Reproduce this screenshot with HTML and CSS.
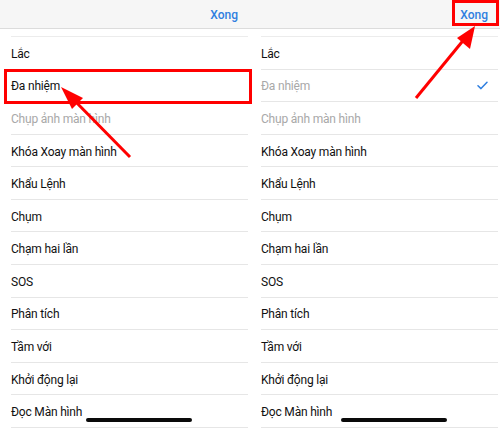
FILE: index.html
```html
<!DOCTYPE html>
<html lang="vi">
<head>
<meta charset="utf-8">
<link rel="stylesheet" href="styles.css">
</head>
<body>
<div class="screen">
  <section class="panel">
    <header class="navbar"><span class="done">Xong</span></header>
    <ul class="list">
      <li class="row">Lắc</li>
      <li class="row">Đa nhiệm</li>
      <li class="row dim">Chụp ảnh màn hình</li>
      <li class="row">Khóa Xoay màn hình</li>
      <li class="row">Khẩu Lệnh</li>
      <li class="row">Chụm</li>
      <li class="row">Chạm hai lần</li>
      <li class="row">SOS</li>
      <li class="row">Phân tích</li>
      <li class="row">Tầm với</li>
      <li class="row">Khởi động lại</li>
      <li class="row">Đọc Màn hình</li>
    </ul>
    <div class="home"></div>
  </section>
  <section class="panel">
    <header class="navbar"><span class="done">Xong</span></header>
    <ul class="list">
      <li class="row">Lắc</li>
      <li class="row dim">Đa nhiệm
        <svg class="check" width="11" height="9" viewBox="0 0 11 9"><path d="M1 4.8 L4 7.6 L10 1.2" fill="none" stroke="#2f7fe0" stroke-width="1.5" stroke-linecap="round" stroke-linejoin="round"/></svg>
      </li>
      <li class="row dim">Chụp ảnh màn hình</li>
      <li class="row">Khóa Xoay màn hình</li>
      <li class="row">Khẩu Lệnh</li>
      <li class="row">Chụm</li>
      <li class="row">Chạm hai lần</li>
      <li class="row">SOS</li>
      <li class="row">Phân tích</li>
      <li class="row">Tầm với</li>
      <li class="row">Khởi động lại</li>
      <li class="row">Đọc Màn hình</li>
    </ul>
    <div class="home"></div>
  </section>

  <div class="box box-left"></div>
  <div class="box box-right"></div>
  <svg class="arrows" width="500" height="429" viewBox="0 0 500 429">
    <line x1="130" y1="157" x2="70" y2="96" stroke="#f00" stroke-width="3"/>
    <polygon points="61,87 83,98 72,109" fill="#f00"/>
    <line x1="416" y1="98" x2="466" y2="37" stroke="#f00" stroke-width="3"/>
    <polygon points="475,26 470,49 457,38" fill="#f00"/>
  </svg>
</div>
</body>
</html>
```
FILE: styles.css
```css
* { box-sizing: border-box; }
html, body { margin: 0; padding: 0; background: #fff; }
body {
  font-family: "Roboto", "Liberation Sans", Arial, sans-serif;
  width: 500px;
  height: 429px;
  overflow: hidden;
}
.screen {
  position: relative;
  display: flex;
  width: 500px;
  height: 429px;
  overflow: hidden;
}
.panel {
  position: relative;
  width: 250px;
  height: 429px;
  display: flex;
  flex-direction: column;
  background: #fff;
}
.navbar {
  height: 29px;
  background: #f6f6f6;
  border-bottom: 1px solid #dcdcdc;
  display: flex;
  justify-content: flex-end;
  align-items: center;
  padding-right: 12px;
  flex-shrink: 0;
}
.done {
  color: #2f7fe0;
  font-size: 12px;
  font-weight: 500;
  margin-top: 1px;
}
.list {
  list-style: none;
  margin: 7px 2px 0 11px;
  padding: 0;
  border-top: 1px solid #ececec;
}
.row {
  height: 32.58px;
  border-bottom: 1px solid #e6e6e6;
  display: flex;
  align-items: center;
  justify-content: space-between;
  font-size: 12px;
  letter-spacing: -0.2px;
  color: #111;
  padding-right: 10px;
  padding-top: 2px;
}
.row.dim { color: #a8a8a8; }
.check { display: block; margin-top: -2px; }
.home {
  position: absolute;
  left: 86px;
  top: 418px;
  width: 106px;
  height: 4px;
  border-radius: 2px;
  background: #0a0a0a;
}
.panel + .panel .home { left: 91px; }
.box {
  position: absolute;
  border: 3px solid #f00;
}
.box-left { left: 4px; top: 69px; width: 248px; height: 35px; }
.box-right { left: 452px; top: 0; width: 47px; height: 26px; }
.arrows { position: absolute; left: 0; top: 0; pointer-events: none; }
```
